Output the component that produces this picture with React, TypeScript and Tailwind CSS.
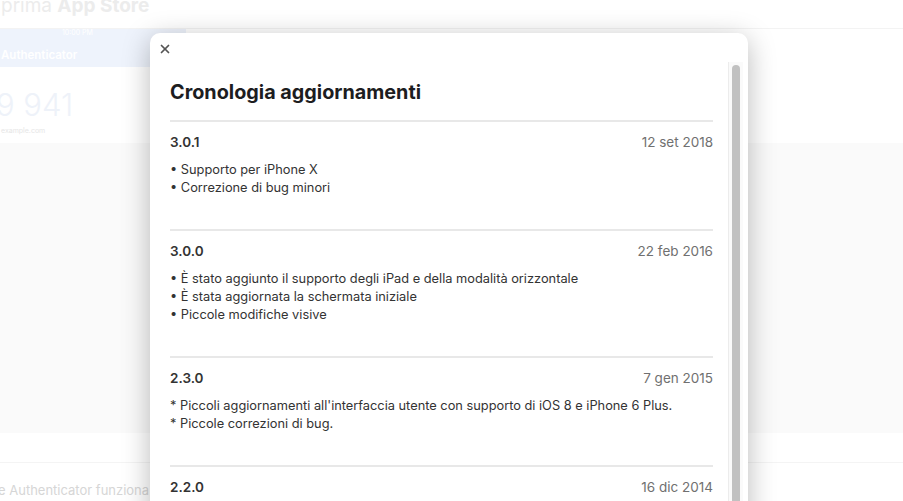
import React from "react";
import { X } from "lucide-react";

const releases = [
  {
    version: "3.0.1",
    date: "12 set 2018",
    notes: ["• Supporto per iPhone X", "• Correzione di bug minori"],
  },
  {
    version: "3.0.0",
    date: "22 feb 2016",
    notes: [
      "• È stato aggiunto il supporto degli iPad e della modalità orizzontale",
      "• È stata aggiornata la schermata iniziale",
      "• Piccole modifiche visive",
    ],
  },
  {
    version: "2.3.0",
    date: "7 gen 2015",
    notes: [
      "* Piccoli aggiornamenti all'interfaccia utente con supporto di iOS 8 e iPhone 6 Plus.",
      "* Piccole correzioni di bug.",
    ],
  },
  {
    version: "2.2.0",
    date: "16 dic 2014",
    notes: ["* Aggiornamenti minori."],
  },
];

const font = { fontFamily: "Inter, 'Noto Sans', sans-serif" };

function Backdrop() {
  return (
    <div className="flex flex-col w-full h-full bg-white" style={font}>
      {/* faded page behind the sheet */}
      <div className="h-[29px] border-b border-[#f3f3f3] overflow-hidden">
        <div className="-mt-[6px] ml-[1px] text-[19px] leading-[24px] text-[#ececec] whitespace-nowrap">
          prima <span className="font-bold">App Store</span>
        </div>
      </div>
      <div className="w-[186px] flex flex-col">
        <div className="h-[38px] bg-[#eef3fc] flex flex-col">
          <div className="text-[7px] leading-[8px] text-white pl-[62px]">10:00 PM</div>
          <div className="text-[11.5px] font-semibold text-white mt-[10px] ml-[1px]">Authenticator</div>
        </div>
        <div className="h-[76px] bg-white flex flex-col pt-[21px]">
          <div className="text-[31px] leading-[34px] font-light text-[#eef2f9] -ml-[4px] whitespace-nowrap">9 941</div>
          <div className="text-[7px] text-[#e6e6e6] ml-[1px] mt-[4px]">example.com</div>
        </div>
      </div>
      <div className="h-[290px] bg-[#fafafa]" />
      <div className="h-[31px] border-b border-[#f4f4f4]" />
      <div className="text-[13px] text-[#d6d6d6] pt-[18px] -ml-[2px] whitespace-nowrap">e Authenticator funziona</div>
    </div>
  );
}

function Release({ version, date, notes }: { version: string; date: string; notes: string[] }) {
  return (
    <div className="border-t-2 border-[#e8e8e8] pt-[10px] pb-[32px]">
      <div className="flex items-center justify-between h-[20px]">
        <span className="text-[13.5px] font-semibold text-[#333]">{version}</span>
        <span className="text-[13.5px] text-[#707070]">{date}</span>
      </div>
      <div className="mt-[9px]">
        {notes.map((n) => (
          <div key={n} className="text-[12.8px] leading-[18px] text-[#333]">
            {n}
          </div>
        ))}
      </div>
    </div>
  );
}

export default function App() {
  return (
    <div className="relative w-[903px] h-[501px] overflow-hidden bg-white">
      <Backdrop />
      <div
        className="absolute left-[150px] top-[33px] w-[598px] h-[520px] bg-white rounded-[10px] shadow-[0_6px_28px_rgba(0,0,0,0.28)] flex flex-col"
        style={font}
      >
        <div className="h-[29px] flex items-start pt-[9px] pl-[8px]">
          <X size={14} strokeWidth={3} className="text-[#555]" />
        </div>
        <div className="flex flex-1 min-h-0">
          <div className="flex-1 pl-[20px] pr-[15px] pt-[16px]">
            <h2 className="text-[19.8px] leading-[28px] font-bold text-[#1d1d1f] mb-[14px]">
              Cronologia aggiornamenti
            </h2>
            {releases.map((r) => (
              <Release key={r.version} {...r} />
            ))}
          </div>
          <div className="w-[15px] mr-[5px] border-l border-[#ececec] bg-[#fafafa] pt-[3px] flex justify-center">
            <div className="w-[8px] h-full rounded-t-full bg-[#c1c1c1]" />
          </div>
        </div>
      </div>
    </div>
  );
}
